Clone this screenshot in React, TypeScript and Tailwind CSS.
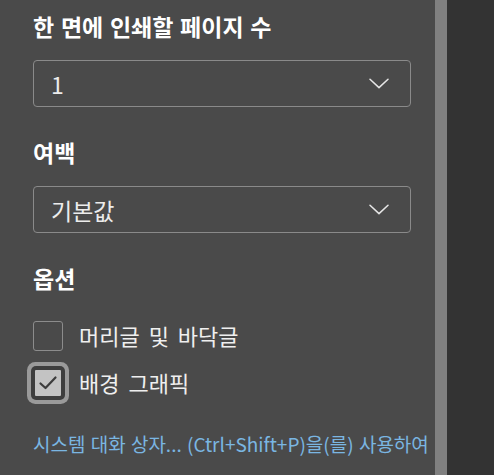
import React from "react";

const font = { fontFamily: '"Noto Sans CJK KR", "Noto Sans", sans-serif' };

function Chevron() {
  return (
    <svg width="20" height="11" viewBox="0 0 20 11" fill="none">
      <path d="M1 1.2 L10 9.6 L19 1.2" stroke="#e6e6e6" strokeWidth="1.5" strokeLinecap="round" strokeLinejoin="round" />
    </svg>
  );
}

function Select({ value }: { value: string }) {
  return (
    <div className="flex h-[47px] w-[378px] items-center justify-between rounded-[4px] border border-[#8a8a8a] pl-[17px] pr-[21px]">
      <span className="text-[23px] leading-[30px] text-[#ececec]">{value}</span>
      <Chevron />
    </div>
  );
}

export default function App() {
  return (
    <div className="flex h-[475px] w-[494px] overflow-hidden" style={font}>
      <div className="flex w-[435px] flex-col bg-[#4a4a4a] pl-[33px] pr-[24px]">
        <div className="mt-[11px] text-[23px] font-bold leading-[30px] text-white [word-spacing:1.5px]">
          한 면에 인쇄할 페이지 수
        </div>
        <div className="mt-[19px]">
          <Select value="1" />
        </div>
        <div className="mt-[30px] text-[23px] font-bold leading-[30px] text-white">여백</div>
        <div className="mt-[19px]">
          <Select value="기본값" />
        </div>
        <div className="mt-[30px] text-[23px] font-bold leading-[30px] text-white">옵션</div>
        <div className="mt-[28px] flex h-[30px] items-center gap-[16px]">
          <div className="h-[30px] w-[30px] shrink-0 rounded-[3px] border border-[#8c8c8c]" />
          <span className="pb-[3px] text-[22px] leading-[30px] text-[#efefef] [word-spacing:4px]">머리글 및 바닥글</span>
        </div>
        <div className="mt-[17px] flex h-[30px] items-center gap-[16px]">
          <div className="flex h-[30px] w-[30px] shrink-0 items-center justify-center rounded-[3px] border-2 border-[#3e3e3e] bg-[#c3c3c3] shadow-[0_0_0_2px_#3e3e3e,0_0_0_6px_#9a9a9a]">
            <svg width="20" height="16" viewBox="0 0 20 16" fill="none">
              <path d="M2.5 8.5 L7.5 13 L17.5 2.5" stroke="#3c3c3c" strokeWidth="2.2" strokeLinecap="round" strokeLinejoin="round" />
            </svg>
          </div>
          <span className="pb-[3px] text-[22px] leading-[30px] text-[#efefef] [word-spacing:4px]">배경 그래픽</span>
        </div>
        <div className="mt-[34px] whitespace-nowrap text-[19px] leading-[24px] text-[#7ab6e2] [word-spacing:1px]">
          시스템 대화 상자... (Ctrl+Shift+P)을(를) 사용하여
        </div>
      </div>
      <div className="w-[12px] bg-[#808080]" />
      <div className="flex-1 bg-[#333333]" />
    </div>
  );
}
